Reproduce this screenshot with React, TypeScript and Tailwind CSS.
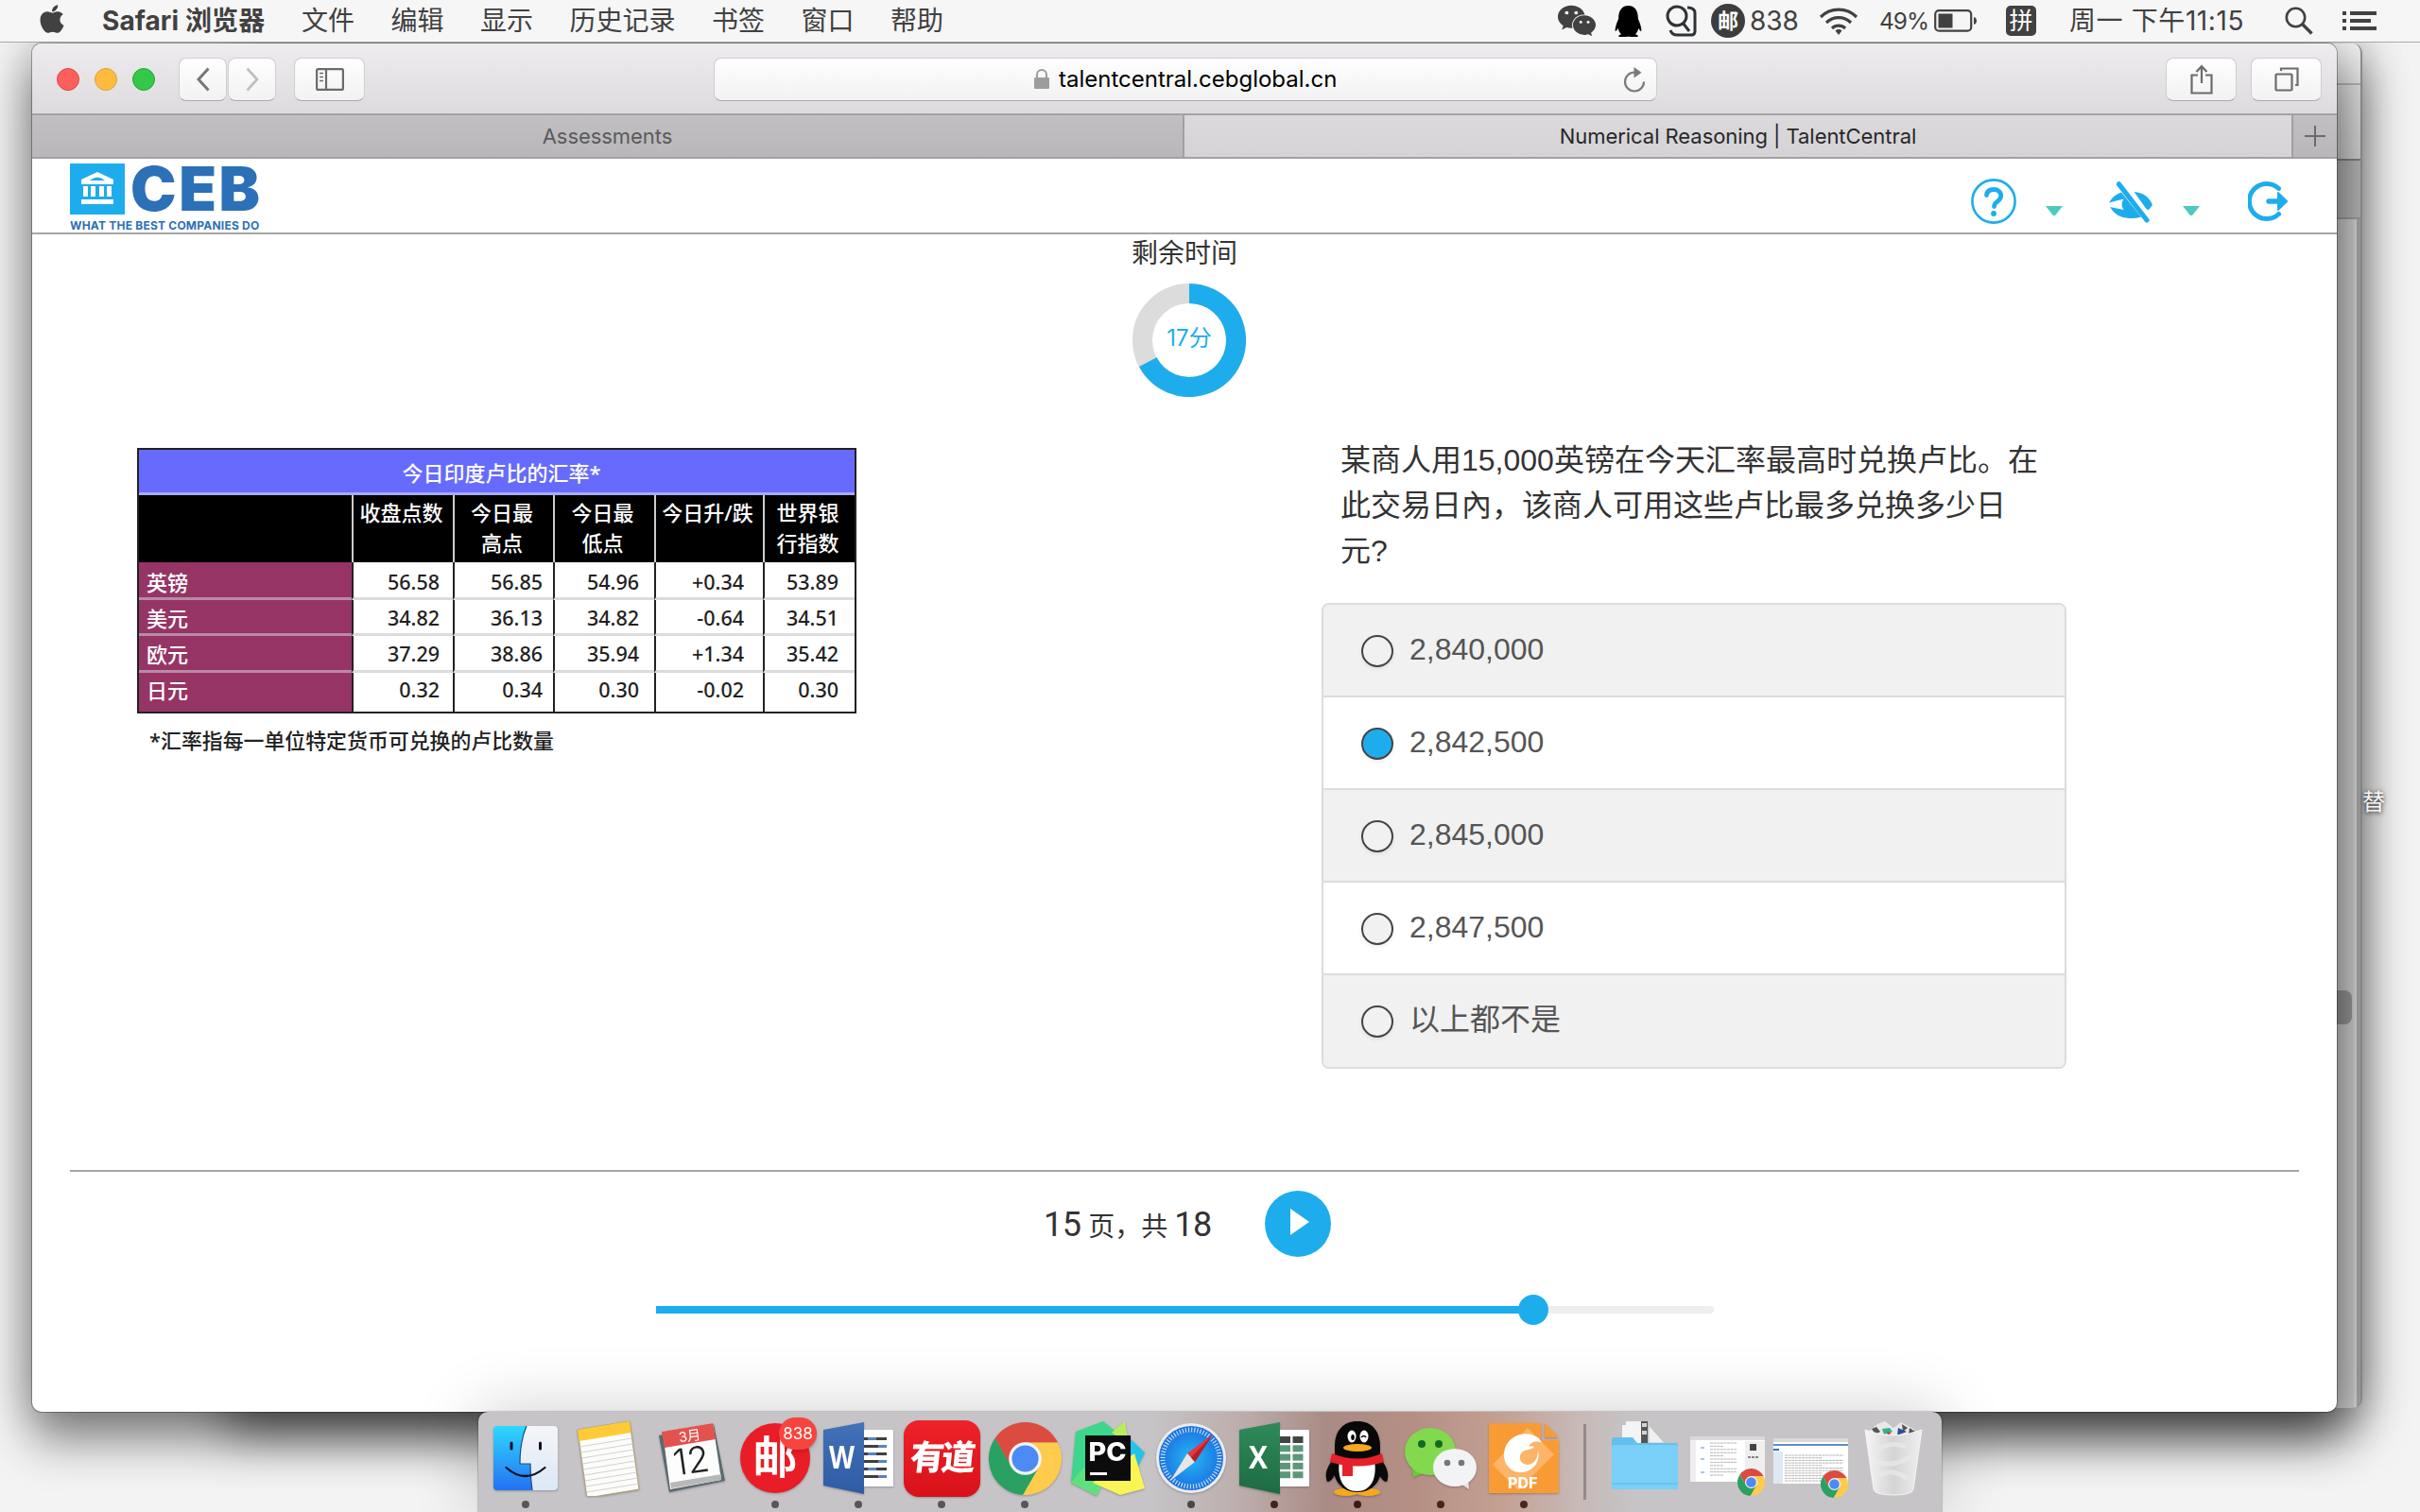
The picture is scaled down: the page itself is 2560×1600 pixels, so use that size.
import React from "react";
import { FaApple, FaWeixin, FaQq } from "react-icons/fa";

const menus = ["文件", "编辑", "显示", "历史记录", "书签", "窗口", "帮助"];

const tableHead = [["收盘点数"], ["今日最", "高点"], ["今日最", "低点"], ["今日升/跌"], ["世界银", "行指数"]];
const tableRows = [
  ["英镑", "56.58", "56.85", "54.96", "+0.34", "53.89"],
  ["美元", "34.82", "36.13", "34.82", "-0.64", "34.51"],
  ["欧元", "37.29", "38.86", "35.94", "+1.34", "35.42"],
  ["日元", "0.32", "0.34", "0.30", "-0.02", "0.30"],
];
const cellPad = ["pl-[8px]", "pr-[14px]", "pr-[11px]", "pr-[16px]", "pr-[20px]", "pr-[17px]"];
const rowSize = [
  "h-[40px] leading-[42px] border-b-3",
  "h-[38px] leading-[38px] border-b-3",
  "h-[39px] leading-[38px] border-b-3",
  "h-[41px] leading-[36px]",
];

const options = [
  { text: "2,840,000", fill: "bg-[#f1f1f1]" },
  { text: "2,842,500", fill: "bg-[#1eadec]" },
  { text: "2,845,000", fill: "bg-[#f1f1f1]" },
  { text: "2,847,500", fill: "bg-[#f1f1f1]" },
  { text: "以上都不是", fill: "bg-[#f1f1f1]" },
];

function MenuBar() {
  return (
    <div className="relative z-10 flex h-[45px] items-center border-b border-[#a9a9a9] bg-[#f6f6f6] text-[28px] leading-[44px] text-[#414141]">
      <FaApple className="mb-[4px] ml-[38px] h-[34px] w-[34px]" />
      <div className="ml-[36px] w-[211px] whitespace-nowrap text-[28px] font-bold tracking-[0.1px]">
        Safari 浏览器
      </div>
      <div className="flex gap-[38.5px]">
        {menus.map((m) => (
          <span key={m} className="whitespace-nowrap">{m}</span>
        ))}
      </div>
      <div className="grow" />
      <FaWeixin className="h-[40px] w-[42px]" />
      <FaQq className="ml-[19px] h-[33px] w-[29px] text-black" />
      <svg className="ml-[24px] h-[34px] w-[36px]" viewBox="0 0 36 34" fill="none" stroke="#2f3336" strokeWidth="3">
        <circle cx="13" cy="12" r="10" />
        <path d="M19 19l7 9M24 3c6 0 8 3 8 6v19c0 3-2 4-4 4H13c-3 0-6-2-7-5" />
      </svg>
      <div className="ml-[13px] grid h-[36px] w-[36px] place-items-center rounded-full bg-[#3d3d3d] text-[22px] font-bold leading-none text-white">
        邮
      </div>
      <span className="ml-[5px] w-[55px] text-[28px]">838</span>
      <svg className="ml-[18px] h-[32px] w-[42px]" viewBox="0 0 42 32" fill="none" stroke="#414141" strokeWidth="3.2">
        <path d="M2 12a27 27 0 0 1 38 0M8 18a18.500 18.500 0 0 1 26 0M14 24a10 10 0 0 1 14 0" />
        <path d="M17.500 26.500a5 5 0 0 1 7 0L21 31z" fill="#414141" stroke="none" />
      </svg>
      <span className="ml-[22px] w-[53px] text-[24.500px] tracking-[-1px]">49%</span>
      <svg className="ml-[5px] h-[24px] w-[46px]" viewBox="0 0 46 24">
        <rect x="1.200" y="1.200" width="38" height="21.500" rx="4" fill="none" stroke="#414141" strokeWidth="2.200" />
        <rect x="4.500" y="4.500" width="15" height="15" fill="#414141" />
        <path d="M42 8c4 1 4 7 0 8z" fill="#414141" />
      </svg>
      <div className="ml-[30px] grid h-[32px] w-[32px] place-items-center rounded-[5px] bg-[#414141] text-[25px] leading-none text-white">
        拼
      </div>
      <span className="ml-[35px] w-[186px] whitespace-nowrap text-[28px] tracking-[0.6px]">周一 下午11:15</span>
      <svg className="ml-[42px] h-[30px] w-[30px]" viewBox="0 0 30 30" fill="none" stroke="#414141" strokeWidth="2.600">
        <circle cx="11.500" cy="11.500" r="9.700" />
        <path d="M18.500 18.500l10 10" strokeWidth="3.400" />
      </svg>
      <svg className="ml-[31px] mr-[46px] h-[20px] w-[36px]" viewBox="0 0 36 20" fill="#414141">
        <path d="M0 0h4v4H0zM8 0h28v4H8zM0 8h4v4H0zM8 8h22v4H8zM0 16h4v4H0zM8 16h28v4H8z" />
      </svg>
    </div>
  );
}

const btn =
  "grid h-[46px] place-items-center rounded-[8px] border border-[#d0ced0] border-b-[#a9a8aa] bg-linear-to-b from-[#fefefe] to-[#f2f2f2]";

function Toolbar() {
  return (
    <div className="flex h-[76px] items-center border-b-2 border-[#a4a2a4] bg-linear-to-b from-[#eeecef] to-[#dddbde] pt-[2px]">
      <div className="ml-[26px] flex gap-[16px]">
        <div className="h-[24px] w-[24px] rounded-full border border-[#e0443e] bg-[#fd605c]" />
        <div className="h-[24px] w-[24px] rounded-full border border-[#dfa033] bg-[#fdbc40]" />
        <div className="h-[24px] w-[24px] rounded-full border border-[#24a735] bg-[#34c84a]" />
      </div>
      <div className={btn + " ml-[25px] w-[51px]"}>
        <svg className="h-[26px] w-[14px]" viewBox="0 0 14 26" fill="none" stroke="#767676" strokeWidth="3"><path d="M12.500 1.500L2 13l10.500 11.500" /></svg>
      </div>
      <div className={btn + " ml-px w-[51px]"}>
        <svg className="h-[26px] w-[14px]" viewBox="0 0 14 26" fill="none" stroke="#bebebe" strokeWidth="2.600"><path d="M1.500 1.500L12 13 1.500 24.500" /></svg>
      </div>
      <div className={btn + " ml-[19px] w-[75px]"}>
        <svg className="h-[24px] w-[30px]" viewBox="0 0 30 24" fill="none" stroke="#6b6b6b" strokeWidth="2.200">
          <rect x="1.100" y="1.100" width="27.800" height="21.800" rx="1.500" />
          <path d="M11 1v22" />
          <path d="M4 5.500h4M4 9.500h4M4 13.500h4" strokeWidth="1.600" />
        </svg>
      </div>
      <div className="ml-[369px] flex h-[46px] w-[998px] items-center rounded-[8px] border border-[#d0ced0] border-b-[#a9a8aa] bg-linear-to-b from-[#fefefe] to-[#f2f2f2]">
        <svg className="ml-[338px] h-[22px] w-[16px]" viewBox="0 0 16 22">
          <rect x="0" y="9" width="16" height="12" rx="1" fill="#9c9c9c" />
          <path d="M3 10V6a5 5 0 0 1 10 0v4" fill="none" stroke="#9c9c9c" strokeWidth="2" />
        </svg>
        <span className="ml-[10px] w-[296px] whitespace-nowrap text-[24px] leading-[30px] text-black">talentcentral.cebglobal.cn</span>
        <svg className="ml-[301px] h-[27px] w-[24px]" viewBox="0 0 24 27">
          <path d="M12 5.500a10 10 0 1 0 10 10" fill="none" stroke="#7a7a7a" strokeWidth="2.200" />
          <path d="M11.500 0l8 5.800-8 5.800z" fill="#7a7a7a" />
        </svg>
      </div>
      <div className="grow" />
      <div className={btn + " w-[75px]"}>
        <svg className="h-[32px] w-[24px]" viewBox="0 0 24 32" fill="none" stroke="#6b6b6b" strokeWidth="2.200">
          <path d="M8 11.500H1.500v19h21v-19H16M12 20V3M6.500 8L12 2.200 17.500 8" />
        </svg>
      </div>
      <div className={btn + " ml-[15px] mr-[16px] w-[75px]"}>
        <svg className="h-[26px] w-[26px]" viewBox="0 0 26 26" fill="none" stroke="#6b6b6b" strokeWidth="2.200">
          <rect x="1.500" y="7.500" width="17" height="17" rx="1" />
          <path d="M7 4V1.500h17.500v17.500H22" />
        </svg>
      </div>
    </div>
  );
}

function Tabs() {
  return (
    <div className="flex h-[46px] border-b-2 border-[#a2a0a2] text-[22px] leading-[44px]">
      <div className="w-[1219px] border-r-2 border-[#a09fa1] bg-linear-to-b from-[#c1bfc2] to-[#b9b7ba] text-center tracking-[-0.05px] text-[#5b5a5c]">
        Assessments
      </div>
      <div className="grow bg-linear-to-b from-[#dbd9dc] to-[#d5d3d6] text-center tracking-[-0.05px] text-[#272728]">
        Numerical Reasoning | TalentCentral
      </div>
      <div className="grid w-[48px] place-items-center border-l-2 border-[#a09fa1] bg-linear-to-b from-[#c1bfc2] to-[#b9b7ba]">
        <svg className="h-[22px] w-[22px]" viewBox="0 0 22 22" stroke="#6a6a6a" strokeWidth="2"><path d="M11 0v22M0 11h22" /></svg>
      </div>
    </div>
  );
}

function Caret() {
  return (
    <svg className="h-[10px] w-[20px]" viewBox="0 0 20 10"><path d="M1 0h18l-7.500 9.400q-1.500 1.200-3 0z" fill="#4ec9bd" /></svg>
  );
}

function SiteHeader() {
  return (
    <div className="flex h-[80px] border-b-2 border-[#a6a6a6] bg-white">
      <div className="ml-[40px] mt-[5px]">
        <div className="flex h-[54px]">
          <svg className="h-[54px] w-[58px]" viewBox="0 0 58 54">
            <rect width="58" height="54" fill="#1eadec" />
            <path d="M12 17L29 9l17 8v5H12z" fill="#fff" />
            <path d="M21 18q8-7 16 0z" fill="#1eadec" />
            <path d="M14 24h5v11h-5zM22 24h5v11h-5zM31 24h5v11h-5zM39 24h5v11h-5zM12 38h34v5H12z" fill="#fff" />
          </svg>
          <div className="ml-[6px] whitespace-nowrap text-[65px] font-black leading-[53px] tracking-[2.6px] text-[#2c70b8]">CEB</div>
        </div>
        <div className="mt-[4px] whitespace-nowrap text-[12px] font-bold leading-[15px] tracking-[0.22px] text-[#2c70b8]">
          WHAT THE BEST COMPANIES DO
        </div>
      </div>
      <div className="grow" />
      <div className="flex items-center pt-[11px]">
        <svg className="h-[48px] w-[48px]" viewBox="0 0 48 48">
          <circle cx="24" cy="24" r="22.600" fill="none" stroke="#1eadec" strokeWidth="2.600" />
          <path d="M16.500 17.500c.5-4 3.500-6 7.500-6 4.500 0 7.700 2.600 7.700 6.800 0 6-7.200 5.500-7.200 11.200" fill="none" stroke="#1eadec" strokeWidth="4.800" strokeLinecap="round" />
          <circle cx="24" cy="37" r="2.900" fill="#1eadec" />
        </svg>
        <div className="ml-[30px] mt-[20px]"><Caret /></div>
        <svg className="ml-[48px] mt-[4px] h-[46px] w-[48px]" viewBox="0 0 48 46" fill="#1eadec">
          <path d="M0 22.500Q5 14 13 11.500L34 37.500Q28 39.500 21 39 7 38 1 27L15.500 30Q11.500 24.500 15.500 18.500z" />
          <path d="M26.500 11Q41 12 46 25l-4 5q-2 0-3-1.500z" />
          <path d="M10.500 2.800L40 41" stroke="#1eadec" strokeWidth="5.200" strokeLinecap="round" />
        </svg>
        <div className="ml-[29px] mt-[20px]"><Caret /></div>
        <svg className="ml-[50px] mr-[50px] h-[42px] w-[44px]" viewBox="0 0 44 42">
          <path d="M32.500 7.500A18.500 18.500 0 1 0 32.500 34.500" fill="none" stroke="#1eadec" strokeWidth="5" strokeLinecap="round" />
          <path d="M22 18.300h9v-6q0-2 1.800-.8L42.500 21l-9.700 9.500q-1.800 1.200-1.800-.8v-6h-9a2.700 2.700 0 0 1 0-5.400z" fill="#1eadec" />
        </svg>
      </div>
    </div>
  );
}

function Timer() {
  return (
    <div className="flex h-[182px] flex-col items-center">
      <div className="h-[52px] text-[28px] leading-[41px] text-[#333]">剩余时间</div>
      <div className="ml-[10px] grid h-[120px] w-[120px] place-items-center">
        <svg className="col-start-1 row-start-1 h-[120px] w-[120px]" viewBox="0 0 120 120" fill="none" strokeWidth="21">
          <circle cx="60" cy="60" r="49.500" stroke="#dcdcdc" />
          <path d="M60 10.500A49.500 49.500 0 1 1 16.300 83.200" stroke="#1eadec" />
        </svg>
        <span className="col-start-1 row-start-1 mb-[4px] text-[24px] leading-[30px] text-[#1eadec]">17分</span>
      </div>
    </div>
  );
}

function RateTable() {
  return (
    <div className="w-[761px]">
      <div className="border-2 border-[#222] bg-white font-['Noto_Sans','Noto_Sans_CJK_SC',sans-serif] text-[22px] font-medium">
        <div className="h-[48px] border-b-3 border-[#a9abf5] bg-[#676bfd] pl-[10px] text-center leading-[48px] text-white">今日印度卢比的汇率*</div>
        <div className="grid h-[71px] grid-cols-[225px_107px_106px_107px_115px_97px] bg-black leading-[32px] text-white">
          <div />
          {tableHead.map((lines) => (
            <div key={lines.join("")} className="flex flex-col items-center whitespace-nowrap border-l-2 border-[#ccc] pr-[4px] pt-[2px]">
              {lines.map((l) => <div key={l}>{l}</div>)}
            </div>
          ))}
        </div>
        {tableRows.map((row, i) => (
          <div key={row[0]} className="grid grid-cols-[225px_107px_106px_107px_115px_97px] text-[21.5px] text-[#222]">
            {row.map((c, j) => (
              <div
                key={j}
                className={
                  (j === 0
                    ? "border-b-[#b98aa6] bg-[#963565] text-left text-[22px] text-white "
                    : "border-b-[#dcdcdc] border-l-2 border-l-[#222] text-right ") + cellPad[j] + " " + rowSize[i]
                }
              >
                {c}
              </div>
            ))}
          </div>
        ))}
      </div>
      <div className="mt-[12px] pl-[13px] font-['Noto_Sans','Noto_Sans_CJK_SC',sans-serif] text-[21.9px] font-medium leading-[34px] text-[#222]">
        *汇率指每一单位特定货币可兑换的卢比数量
      </div>
    </div>
  );
}

function Question() {
  return (
    <div className="w-[788px] font-['Liberation_Sans','Noto_Sans_CJK_SC',sans-serif] text-[32px]">
      <p className="w-[780px] pl-[20px] leading-[48px] text-[#333]">
        某商人用15,000英镑在今天汇率最高时兑换卢比。在
        <br />
        此交易日內，该商人可用这些卢比最多兑换多少日
        <br />
        元?
      </p>
      <div className="mt-[31px] divide-y-2 divide-[#dcdcdc] overflow-hidden rounded-[8px] border-2 border-[#dcdcdc] text-[#555]">
        {options.map((o, i) => (
          <div key={o.text} className={"flex h-[98px] items-center pb-[3px] last:h-[97px] " + (i % 2 ? "bg-white" : "bg-[#f1f1f1]")}>
            <div className={"ml-[40px] mt-[4px] h-[34px] w-[34px] rounded-full border-2 border-[#444] shadow-[0_2px_4px_rgba(0,0,0,0.08)] " + o.fill} />
            <span className="ml-[17px]">{o.text}</span>
          </div>
        ))}
      </div>
    </div>
  );
}

function PageFooter() {
  return (
    <div className="mx-[40px] border-t-2 border-[#a6a6a6]">
      <div className="flex h-[110px] items-center text-[#333]">
        <div className="ml-[1030px] flex w-[181px] items-baseline whitespace-nowrap pt-[2px] font-['Roboto','Noto_Sans_CJK_SC',sans-serif] text-[36px] tracking-[-0.6px]">
          <span>15</span>
          <span className="ml-[8px] text-[28px] tracking-normal">页，共</span>
          <span className="ml-[7px]">18</span>
        </div>
        <div className="ml-[53px] grid h-[70px] w-[70px] place-items-center rounded-full bg-[#1eadec]">
          <svg className="mb-[4px] ml-[3px] h-[28px] w-[20px]" viewBox="0 0 20 28"><path d="M0 0l20 14L0 28z" fill="#fff" /></svg>
        </div>
      </div>
      <div className="ml-[620px] mt-[20px] flex h-[32px] w-[1119px] items-center">
        <div className="h-[8px] w-[914px] bg-[#1eadec]" />
        <div className="-ml-[2px] h-[32px] w-[32px] rounded-full bg-[#1eadec]" />
        <div className="h-[8px] grow rounded-r-full bg-[#eee]" />
      </div>
    </div>
  );
}

function Chrome({ className }: { className: string }) {
  return (
    <svg className={className} viewBox="0 0 100 100">
      <path d="M8.500 22.100A50 50 0 0 1 94.900 28H50L31 61z" fill="#dc4b40" />
      <path d="M94.900 28A50 50 0 0 1 46.600 99.900L69 61 50 28z" fill="#fecb4c" />
      <path d="M46.600 99.900A50 50 0 0 1 8.500 22.100L31 61h38z" fill="#28a162" />
      <circle cx="50" cy="50" r="22.500" fill="#f3f3f3" />
      <circle cx="50" cy="50" r="18.300" fill="#4c8bf5" />
    </svg>
  );
}

function Finder() {
  return (
    <svg className="h-[68px] w-[68px]" viewBox="0 0 68 68">
      <defs>
        <linearGradient id="fin" x1="0" y1="0" x2="0" y2="1"><stop offset="0" stopColor="#2fd8fe" /><stop offset="1" stopColor="#2471f2" /></linearGradient>
        <linearGradient id="fin2" x1="0" y1="0" x2="0" y2="1"><stop offset="0" stopColor="#f5f5f8" /><stop offset="1" stopColor="#dbe8f6" /></linearGradient>
      </defs>
      <rect width="68" height="68" rx="4" fill="url(#fin)" />
      <path d="M35 0h29a4 4 0 0 1 4 4v60a4 4 0 0 1-4 4H41q-2-13-2-28H28q0-24 7-40z" fill="url(#fin2)" />
      <path d="M35 0q-7 16-7 40h11q0 15 2 28" fill="none" stroke="#16507f" strokeWidth="1.200" />
      <path d="M19 18v6M49.500 18v6" stroke="#112" strokeWidth="3" strokeLinecap="round" />
      <path d="M13.500 44q20 18 41 0" fill="none" stroke="#112" strokeWidth="2.200" strokeLinecap="round" />
    </svg>
  );
}

function Notes() {
  return (
    <svg className="h-[80px] w-[70px]" viewBox="0 0 70 80">
      <path d="M2 10L57 1l10 72-55 9z" fill="#fcfcfa" stroke="#a8935a" strokeWidth="0.800" />
      <path d="M2 10L57 1l1.500 12L3.500 22z" fill="#fccb36" />
      {[0, 1, 2, 3, 4, 5, 6, 7, 8].map((i) => (
        <path key={i} d={`M${4.500 + i * 0.900} ${28 + i * 6}l55-9`} stroke="#d2d2d2" strokeWidth="1" />
      ))}
    </svg>
  );
}

function Calendar() {
  return (
    <svg className="h-[80px] w-[76px]" viewBox="0 0 76 80">
      <path d="M3 16l58-12 12 60-59 12z" fill="#5a6a70" />
      <path d="M7 12L60 3l9 60-54 10z" fill="#fdfdfd" />
      <path d="M6 12L60 3l3 17-54 9z" fill="#e4524e" />
      <path d="M15 66l54-9v6l-53 9z" fill="#b8b8b8" />
      <text x="24" y="22" transform="rotate(-8 34 18)" fontSize="14.500" fill="#fff" fontFamily="Inter, 'Noto Sans CJK SC'">3月</text>
      <text x="19" y="56" transform="rotate(-8 38 50)" fontSize="38" fontWeight="300" fill="#222" fontFamily="Inter">12</text>
    </svg>
  );
}

function OfficeIcon({ letter, dark, light, id }: { letter: string; dark: string; light: string; id: string }) {
  const excel = letter === "X";
  return (
    <svg className="h-[80px] w-[76px]" viewBox="0 0 76 80">
      <defs><linearGradient id={id} x1="0" y1="0" x2="0" y2="1"><stop offset="0" stopColor={light} /><stop offset="1" stopColor={dark} /></linearGradient></defs>
      <rect x="38" y="10" width="37" height="60" rx="1" fill="#fff" />
      {excel
        ? [0, 1, 2, 3, 4].map((i) => (
            <g key={i} fill={i === 0 ? "#444" : "#5c9878"}>
              <rect x="44" y={17 + i * 9.300} width="11" height="7" />
              <rect x="57.500" y={17 + i * 9.300} width="11" height="7" />
            </g>
          ))
        : [0, 1, 2, 3, 4, 5].map((i) => (
            <g key={i}>
              <rect x="44" y={18 + i * 8} width="24" height="3" fill="#3f3f3f" />
              <rect x={i % 2 ? 59 : 48} y={18 + i * 8} width="9" height="3" fill="#5b82bd" />
            </g>
          ))}
      <path d="M1 10l43-8v76L1 69z" fill={`url(#${id})`} />
      <text x={excel ? 11 : 7} y="51" fontSize="34" fontWeight="700" fill="#fff" fontFamily="'Open Sans'" textLength={excel ? 20 : 27} lengthAdjust="spacingAndGlyphs">{letter}</text>
    </svg>
  );
}

function PyCharm() {
  return (
    <svg className="h-[80px] w-[80px]" viewBox="0 0 80 80">
      <path d="M6 12L35 1l15 12L20 66 1 66z" fill="#3cd68c" />
      <path d="M1 66L14 50l20 18-6 12z" fill="#5fe07e" />
      <path d="M44 13L58 1l4 24z" fill="#b9ed5c" />
      <path d="M60 16l19 18-12 24z" fill="#22c3ea" />
      <path d="M24 66l44-31 11 37-26 7z" fill="#f9f554" />
      <rect x="16" y="16" width="48" height="48" fill="#0c0c0c" />
      <text x="19.500" y="43" fontSize="27" fontWeight="800" fill="#fff" fontFamily="Inter" textLength="40" lengthAdjust="spacingAndGlyphs">PC</text>
      <rect x="21" y="55" width="18" height="3" fill="#fff" />
    </svg>
  );
}

function Safari() {
  return (
    <svg className="h-[76px] w-[76px]" viewBox="0 0 76 76">
      <defs><radialGradient id="saf"><stop offset="0" stopColor="#24b9f5" /><stop offset="1" stopColor="#1b6fe0" /></radialGradient></defs>
      <circle cx="38" cy="38" r="37" fill="#ececee" />
      <circle cx="38" cy="38" r="34" fill="url(#saf)" />
      <circle cx="38" cy="38" r="30" fill="none" stroke="#cfe6fb" strokeWidth="5" strokeDasharray="1.100 2.040" />
      <path d="M61 13L34 33l8 9z" fill="#e8343a" />
      <path d="M16 62l18-29 8 9z" fill="#e6e6e6" />
      <path d="M61 13L38 37.500l4 4.500z" fill="#b81f28" />
    </svg>
  );
}

function QQ() {
  return (
    <svg className="h-[80px] w-[68px]" viewBox="0 0 68 80">
      <ellipse cx="22" cy="76" rx="13" ry="4" fill="#f6a91f" />
      <ellipse cx="45" cy="76" rx="13" ry="4" fill="#f6a91f" />
      <path d="M9 40C1 50-1 58 2 65c4 0 7-5 9-9zM58 40c8 10 10 18 7 25-4 0-7-5-9-9z" fill="#0a0a0a" />
      <path d="M34 1C18 1 10 12 10 28v8c-6 22 4 40 24 40s30-18 24-40v-8C58 12 50 1 34 1z" fill="#080808" />
      <path d="M15 42h37c3 20-4 33-18.500 33S12 62 15 42z" fill="#fff" />
      <path d="M7 35q27 11 53 0l2 9q-28 9-57 0z" fill="#e62129" />
      <path d="M18 46h11v13H18z" fill="#e62129" />
      <ellipse cx="28" cy="17" rx="4.500" ry="6.500" fill="#fff" /><ellipse cx="41" cy="17" rx="4.500" ry="6.500" fill="#fff" />
      <ellipse cx="29" cy="18" rx="1.800" ry="3" fill="#000" /><path d="M38 18q3-3 5 0" fill="none" stroke="#000" strokeWidth="1.500" />
      <ellipse cx="34" cy="29" rx="15" ry="4" fill="#f6a91f" />
    </svg>
  );
}

function WeChat() {
  return (
    <svg className="h-[66px] w-[78px]" viewBox="0 0 78 66">
      <path d="M9 43L10 53l11-4z" fill="#6cc83c" />
      <ellipse cx="28" cy="26" rx="27" ry="25" fill="#83d94e" />
      <circle cx="19" cy="18" r="4" fill="#156b20" /><circle cx="37" cy="18" r="4" fill="#156b20" />
      <path d="M60 60l9 6-1-12z" fill="#e6e6e8" />
      <ellipse cx="54" cy="43" rx="23" ry="20" fill="#f1f3f4" />
      <circle cx="46" cy="38" r="3.300" fill="#777" /><circle cx="61" cy="38" r="3.300" fill="#777" />
    </svg>
  );
}

function Foxit() {
  return (
    <svg className="h-[74px] w-[74px]" viewBox="0 0 74 74">
      <path d="M0 0h55v18h19v56H0z" fill="#f99b35" />
      <path d="M59 0l15 15H59z" fill="#f99b35" />
      <path d="M41 5l28 28-38 38L4 44z" fill="#fbb468" />
      <path d="M53 16C40 6 18 12 16 32c-1 12 8 21 19 20 12-1 20-12 17-23 0 9-5 15-12 15-7-1-10-9-4-14 5-3 8-1 12-5-2-1-4-1-6 0 2-5 7-7 14-4-1-2-2-3-3-5z" fill="#fff" />
      <text x="20" y="69" fontSize="16" fontWeight="800" fill="#fff" fontFamily="Inter">PDF</text>
    </svg>
  );
}

function Folder() {
  return (
    <svg className="h-[76px] w-[72px]" viewBox="0 0 72 76">
      <path d="M12 6h4V2h20v30H12z" fill="#f4f4f4" />
      <path d="M32 2h7v26h-7z" fill="#555" />
      <path d="M33 4h5v4h-5zM33 12h5v4h-5z" fill="#d5d5d5" />
      <path d="M40 6l17 19H40z" fill="#f0f0f0" stroke="#c4c4c4" />
      <path d="M1 22q0-3 3-3h19l5 6h40q3 0 3 3v46H1z" fill="#63bfee" />
      <path d="M1 30q0-3 3-3h64q3 0 3 3v44H1z" fill="#79cff7" />
      <path d="M1 68h70" stroke="#5db9e6" />
    </svg>
  );
}

function Thumb({ blue }: { blue?: boolean }) {
  return (
    <div className="relative h-[48px] w-[79px]">
      <svg className="h-[48px] w-[79px]" viewBox="0 0 79 48">
        <rect width="79" height="48" fill="#fff" />
        <rect width="79" height="4" fill="#dadada" />
        {blue ? (
          <>
            <rect y="6" width="79" height="2" fill="#5d8fc8" />
            <rect y="14" width="10" height="34" fill="#dfe8f5" />
            <rect y="11" width="6" height="2" fill="#2a6fd0" />
          </>
        ) : (
          <>
            <rect y="4" width="6" height="44" fill="#efefef" /><rect x="58" y="5" width="21" height="43" fill="#efefef" />
            <rect x="63" y="8" width="7" height="7" fill="#444" />
            <path d="M11 12h4M11 24h4M11 38h4" stroke="#4d8ee0" />
            <path d="M61 22h11" stroke="#666" strokeWidth="1.500" strokeDasharray="3 1" />
          </>
        )}
        {[0, 1, 2, 3, 4, 5, 6, 7, 8, 9, 10].map((i) => (
          <path key={i} d={blue ? `M12 ${18 + i * 2.700}h${i % 3 === 1 ? 40 : 62}` : `M21 ${7 + i * 3.400}h${i % 3 === 1 ? 14 : 28}`} stroke="#b4b4b4" strokeWidth="1" strokeDasharray="3 0.600" />
        ))}
      </svg>
      <Chrome className="absolute -bottom-[15px] right-0 h-[29px] w-[29px]" />
    </div>
  );
}

function Trash() {
  return (
    <svg className="h-[80px] w-[62px]" viewBox="0 0 62 80">
      <defs><linearGradient id="tr" x1="0" y1="0" x2="1" y2="0"><stop offset="0" stopColor="#f6f6f6" /><stop offset="0.500" stopColor="#d4d4d4" /><stop offset="1" stopColor="#efefef" /></linearGradient></defs>
      <path d="M5 12l9-8 8-3 9 7 8-6 13 7 4 7-26 5z" fill="#e9e9e9" />
      <path d="M8 9l5-2 4 5-5 3zM40 4l6 4-5 4zM48 8l6 4-7 3z" fill="#555" />
      <path d="M19 9l8-1 3 4-9 3z" fill="#2fb58e" /><path d="M36 8l9 4-10 4z" fill="#2d4f9a" /><path d="M24 12l5 1-4 3z" fill="#c44" />
      <path d="M1 10q30 12 60 0l-9 63q-1 6-21 6t-21-6z" fill="url(#tr)" stroke="#f4f4f4" />
      <path d="M14 30q18-8 30-2M12 44q20 6 38-6M16 58q14-8 30 4" fill="none" stroke="#e9e9e9" strokeWidth="5" opacity="0.700" />
    </svg>
  );
}

function MailApp() {
  return (
    <div className="relative grid h-[74px] w-[74px] place-items-center rounded-full bg-[#e91d27] text-[47px] font-bold leading-none text-white">
      <span className="-mt-[4px]">邮</span>
      <span className="absolute -right-[7px] -top-[6px] grid h-[34px] w-[40px] place-items-center rounded-full bg-[#f8443f] text-[17px] font-normal leading-none shadow-md">838</span>
    </div>
  );
}

function Youdao() {
  return (
    <div className="grid h-[81px] w-[81px] place-items-center rounded-[16px] bg-linear-to-b from-[#ef2229] to-[#d81019]">
      <span className="-mt-[2px] -skew-x-6 whitespace-nowrap text-[36px] font-black leading-none tracking-[-3px] text-white">有道</span>
    </div>
  );
}

const dockApps: { icon: React.ReactNode; dot?: string }[] = [
  { icon: <Finder />, dot: "bg-[#58565a]" },
  { icon: <Notes /> },
  { icon: <Calendar /> },
  { icon: <MailApp />, dot: "bg-[#58565a]" },
  { icon: <OfficeIcon letter="W" dark="#2f5ba4" light="#4272b8" id="wd" />, dot: "bg-[#58565a]" },
  { icon: <Youdao />, dot: "bg-[#58565a]" },
  { icon: <Chrome className="h-[77px] w-[77px]" />, dot: "bg-[#58565a]" },
  { icon: <PyCharm /> },
  { icon: <Safari />, dot: "bg-[#4d4648]" },
  { icon: <OfficeIcon letter="X" dark="#1e6b43" light="#2f8a5a" id="xl" />, dot: "bg-[#42241f]" },
  { icon: <QQ />, dot: "bg-[#3c1a16]" },
  { icon: <WeChat />, dot: "bg-[#44251d]" },
  { icon: <Foxit />, dot: "bg-[#4a2a20]" },
];

function Dock() {
  return (
    <div className="absolute left-[506px] top-[1494px] flex h-[106px] w-[1548px] rounded-t-[10px] bg-linear-[90deg,#c6c4c6_0%,#c6c4c6_46%,#bcaead_52%,#aa8b85_58%,#b58f84_64%,#c4a093_70%,#c7b9b6_75%,#c6c4c6_79%,#c6c4c6_100%] pl-[6px] shadow-[0_0_1px_1px_rgba(0,0,0,0.18),0_0_70px_rgba(0,0,0,0.2)]">
      {dockApps.map((a, i) => (
        <div key={i} className="flex w-[88px] flex-col items-center">
          <div className="grid h-[94px] w-[88px] place-items-center pb-[2px] pt-[6px] drop-shadow-[0_1px_1px_rgba(0,0,0,0.25)]">{a.icon}</div>
          {a.dot && <div className={"h-[8px] w-[8px] rounded-full " + a.dot} />}
        </div>
      ))}
      <div className="mx-[20px] mt-[14px] h-[78px] w-px bg-[#958a8a] outline outline-[0.5px] outline-[#958a8a]" />
      <div className="flex w-[86px] justify-center pt-[8px]"><Folder /></div>
      <div className="flex w-[88px] justify-center pt-[26px]"><Thumb /></div>
      <div className="flex w-[88px] justify-center pt-[28px]"><Thumb blue /></div>
      <div className="flex w-[88px] justify-center pt-[9px]"><Trash /></div>
    </div>
  );
}

function BackWindow() {
  return (
    <div className="absolute left-[240px] top-[46px] flex h-[1444px] w-[2259px] flex-col overflow-hidden rounded-[10px] border-r-2 border-[#929292] bg-[#cdcdcd] shadow-[0_30px_50px_rgba(0,0,0,0.35),0_0_50px_rgba(0,0,0,0.3)]">
      <div className="h-[44px] border-b-2 border-[#b4b4b4] bg-linear-to-b from-[#f2f2f2] to-[#e2e2e2]" />
      <div className="h-[80px] border-b-2 border-[#808080] bg-linear-to-b from-[#dedede] to-[#cfcfcf]" />
      <div className="h-[62px] border-b-2 border-[#9d9d9d] bg-[#b4b4b4]" />
      <div className="flex grow items-start justify-end border-r-4 border-[#a6a6a6]">
        <div className="mt-[816px] h-[36px] w-[32px] rounded-[8px] bg-[#979797]" />
        <div className="ml-[2px] h-full w-[3px] bg-[#d6d6d6]" />
      </div>
    </div>
  );
}

export default function App() {
  return (
    <div className="relative h-[1600px] w-[2560px] overflow-hidden bg-[#f3f3f3] font-['Inter','Noto_Sans_CJK_SC',sans-serif]">
      <BackWindow />
      <div className="absolute left-[2499px] top-[832px] text-[24px] leading-[34px] text-white [text-shadow:0_1px_5px_rgba(0,0,0,0.9)]">替</div>
      <MenuBar />
      <div className="absolute left-[34px] top-[46px] flex h-[1448px] w-[2438px] flex-col rounded-[10px] bg-white shadow-[0_0_0_1px_rgba(0,0,0,0.3),0_32px_50px_rgba(0,0,0,0.4),0_0_50px_rgba(0,0,0,0.3)]">
        <div className="overflow-hidden rounded-t-[10px]">
          <Toolbar />
          <Tabs />
          <SiteHeader />
        </div>
        <Timer />
        <div className="flex h-[808px] items-start">
          <div className="ml-[111px] mt-[44px]"><RateTable /></div>
          <div className="ml-[492px] mt-[33px]"><Question /></div>
        </div>
        <PageFooter />
      </div>
      <Dock />
    </div>
  );
}
